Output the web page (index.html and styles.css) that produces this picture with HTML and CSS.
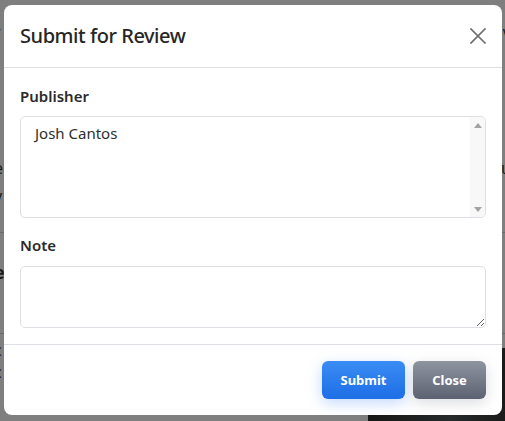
FILE: index.html
```html
<!DOCTYPE html>
<html lang="en">
<head>
<meta charset="utf-8">
<title>Submit for Review</title>
<link rel="stylesheet" href="styles.css">
</head>
<body>
<div class="page">
  <div class="page-row ra"><span class="frag">r</span><span class="frag right">v</span></div>
  <div class="page-row rb"><span class="frag">l</span></div>
  <div class="page-row rc"><span class="frag">e</span><span class="frag right">u</span></div>
  <div class="page-row rd"><span class="frag">y</span></div>
  <div class="page-rule r1"></div>
  <div class="page-row re"><span class="frag bold">e</span></div>
  <div class="page-rule r2"></div>
  <div class="page-bottom">
    <div class="page-lines">
      <span class="frag">c</span>
      <span class="frag">c</span>
      <span class="frag">i</span>
    </div>
    <div class="photo"></div>
  </div>
</div>

<div class="overlay">
  <div class="modal" role="dialog" aria-labelledby="modal-title">
    <div class="modal-header">
      <h2 class="modal-title" id="modal-title">Submit for Review</h2>
      <button class="close-x" type="button" aria-label="Close">
        <svg width="16" height="16" viewBox="0 0 16 16"><path d="M1 1L15 15M15 1L1 15" stroke="#6f6f6f" stroke-width="1.7" stroke-linecap="square" fill="none"/></svg>
      </button>
    </div>
    <div class="modal-body">
      <label class="field-label">Publisher</label>
      <div class="listbox">
        <div class="listbox-text">Josh Cantos</div>
        <div class="scrollbar">
          <span class="arrow up"></span>
          <span class="arrow down"></span>
        </div>
      </div>
      <label class="field-label note-label" for="note">Note</label>
      <textarea class="note" id="note"></textarea>
    </div>
    <div class="modal-footer">
      <button class="btn btn-primary" type="button">Submit</button>
      <button class="btn btn-secondary" type="button">Close</button>
    </div>
  </div>
</div>
</body>
</html>
```

FILE: styles.css
```css
* { box-sizing: border-box; }
html, body { margin: 0; padding: 0; }
body {
  width: 505px;
  height: 421px;
  overflow: hidden;
  background: #7f7f7f;
  font-family: "Noto Sans", "Open Sans", sans-serif;
  position: relative;
}

/* dimmed page behind the dialog */
.page {
  display: flex;
  flex-direction: column;
  color: #1c1c1c;
  font-size: 16px;
  line-height: 20px;
}
.page-row {
  display: flex;
  justify-content: space-between;
  height: 20px;
}
.frag { margin-left: -6px; display: block; height: 20px; }
.frag.right { margin-left: 0; margin-right: -6px; }
.frag.bold { font-weight: 700; font-size: 18px; }
.ra { margin-top: 22px; }
.rb { margin-top: 14px; }
.rc { margin-top: 82px; }
.rd { margin-top: 8px; }
.page-rule { height: 1px; background: #6a6a6a; }
.r1 { margin-top: 26px; }
.re { margin-top: 29px; }
.r2 { margin-top: 51px; }
.page-bottom {
  display: flex;
  justify-content: space-between;
  align-items: flex-start;
}
.page-lines {
  display: flex;
  flex-direction: column;
  gap: 2px;
  padding-top: 6px;
}
.photo {
  width: 137px;
  height: 80px;
  margin-top: 14px;
  background: linear-gradient(90deg, #161616, #262a2a 60%, #1b1b1b);
}

.overlay {
  position: absolute;
  inset: 0;
  padding: 5px 3px 6px 4px;
}
.modal {
  background: #fff;
  border-radius: 8px;
  height: 100%;
  display: flex;
  flex-direction: column;
  color: #2b2b2b;
}
.modal-header {
  height: 63px;
  border-bottom: 1px solid #dcdfe3;
  display: flex;
  align-items: center;
  justify-content: space-between;
  padding: 0 16px;
}
.modal-title {
  margin: 0;
  font-size: 20px;
  font-weight: 500;
  letter-spacing: -0.45px;
  color: #262626;
  line-height: 28px;
}
.close-x {
  border: 0;
  background: none;
  padding: 0;
  width: 16px;
  height: 16px;
  display: flex;
}

.modal-body {
  padding: 17px 16px 16px;
  display: flex;
  flex-direction: column;
  border-bottom: 1px solid #dcdfe3;
}
.field-label {
  display: block;
  font-size: 15px;
  font-weight: 600;
  line-height: 22px;
  color: #2b2b2b;
  margin-bottom: 9px;
}
.note-label { margin-top: 16px; margin-bottom: 10px; }

.listbox {
  height: 102px;
  border: 1px solid #dcdfe3;
  border-radius: 5px;
  display: flex;
  overflow: hidden;
}
.listbox-text {
  flex: 1;
  padding: 5px 14px;
  font-size: 15px;
  line-height: 22px;
  color: #2e2e2e;
}
.scrollbar {
  width: 15px;
  background: #f8f8f8;
  display: flex;
  flex-direction: column;
  justify-content: space-between;
  align-items: center;
  padding: 6px 0 5px;
}
.arrow {
  width: 0;
  height: 0;
  border-left: 4.5px solid transparent;
  border-right: 4.5px solid transparent;
}
.arrow.up { border-bottom: 5px solid #a3a3a3; }
.arrow.down { border-top: 5px solid #a3a3a3; }

.note {
  display: block;
  width: 100%;
  height: 62px;
  border: 1px solid #dcdfe3;
  border-radius: 5px;
  padding: 5px 14px;
  font: inherit;
  font-size: 15px;
  resize: vertical;
  outline: none;
}

.modal-footer {
  display: flex;
  justify-content: flex-end;
  gap: 8px;
  padding: 16px 16px;
}
.btn {
  height: 38px;
  border: 0;
  border-radius: 6px;
  color: #fff;
  font-family: inherit;
  font-size: 13px;
  font-weight: 700;
}
.btn-primary {
  width: 83px;
  background: linear-gradient(180deg, #3a8cf4, #1e6ee6);
  box-shadow: 0 4px 14px rgba(40, 120, 245, 0.28);
}
.btn-secondary {
  width: 73px;
  background: linear-gradient(180deg, #8e94a0, #5c6271);
  box-shadow: 0 4px 14px rgba(90, 96, 110, 0.22);
}
```
